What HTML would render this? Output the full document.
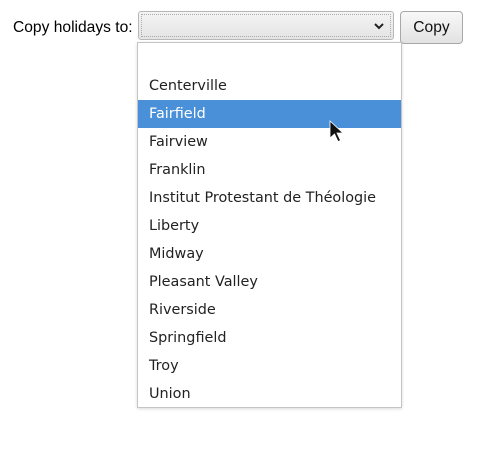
<!DOCTYPE html>
<html><head><style>
body{margin:0;width:477px;height:459px;background:#fff;position:relative;overflow:hidden;font-family:"Liberation Sans",sans-serif;}
.lbl{position:absolute;left:13px;top:19px;font-size:15.6px;color:#000;}
.sel{position:absolute;left:138px;top:11px;width:256px;height:29px;border:1px solid #b8b8b8;border-radius:3px;background:linear-gradient(#f4f4f4,#e4e4e4);box-sizing:border-box;}
.sel .in{position:absolute;left:2px;top:2px;right:2px;bottom:2px;border:1px dotted #aaa;}
.btn{position:absolute;left:400px;top:11px;width:63px;height:33px;border:1px solid #a8a8a8;border-radius:4px;background:linear-gradient(#f8f8f8,#e2e2e2);box-sizing:border-box;font-size:15.6px;text-align:center;line-height:31px;color:#111;}
.dd{position:absolute;left:137px;top:42px;width:265px;height:366px;border:1px solid #c4c4c4;box-sizing:border-box;background:#fff;box-shadow:0 1px 3px rgba(0,0,0,.15);}
.it{position:absolute;left:0;right:0;height:28px;line-height:29px;padding-left:11px;font-family:"DejaVu Sans",sans-serif;font-size:14.4px;color:#222;letter-spacing:0;}
.hl{background:#4a90d9;color:#fff;}
</style></head><body>
<div class="lbl">Copy holidays to:</div>
<div class="sel"><div class="in"></div>
<svg style="position:absolute;left:235px;top:10px" width="10" height="8"><path d="M1 2 L5 6 L9 2" stroke="#222" stroke-width="2" fill="none"/></svg></div>
<div class="btn">Copy</div>
<div class="dd">
<div class="it" style="top:29px">Centerville</div>
<div class="it hl" style="top:57px">Fairfield</div>
<div class="it" style="top:85px">Fairview</div>
<div class="it" style="top:113px">Franklin</div>
<div class="it" style="top:141px">Institut Protestant de Théologie</div>
<div class="it" style="top:169px">Liberty</div>
<div class="it" style="top:197px">Midway</div>
<div class="it" style="top:225px">Pleasant Valley</div>
<div class="it" style="top:253px">Riverside</div>
<div class="it" style="top:281px">Springfield</div>
<div class="it" style="top:309px">Troy</div>
<div class="it" style="top:337px">Union</div>
</div>
<svg style="position:absolute;left:329px;top:120px" width="18" height="24"><path d="M1 1 L1 18 L5.5 14 L9 21.5 L11.5 20.5 L8 13 L14 13 Z" fill="#111" stroke="#fff" stroke-width="0.8"/></svg>
</body></html>
